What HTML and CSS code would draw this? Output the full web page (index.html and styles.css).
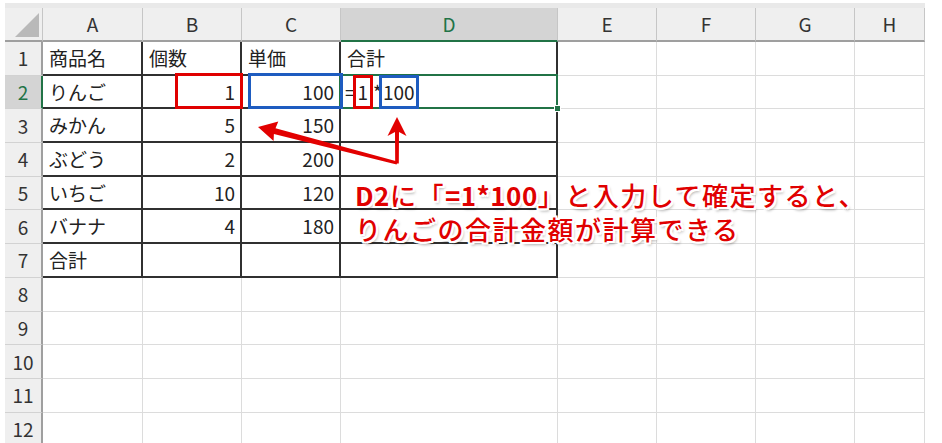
FILE: index.html
```html
<!DOCTYPE html>
<html lang="ja">
<head>
<meta charset="utf-8">
<title>Sheet</title>
<link rel="stylesheet" href="styles.css">
</head>
<body>
<div class="frame">
  <div class="topband"></div>
  <div class="sheet">
    <div class="c hd corner"><span class="tri"></span></div>
    <div class="c hd">A</div>
    <div class="c hd">B</div>
    <div class="c hd">C</div>
    <div class="c hd sel">D</div>
    <div class="c hd">E</div>
    <div class="c hd">F</div>
    <div class="c hd">G</div>
    <div class="c hd">H</div>

    <div class="c rh">1</div>
    <div class="c t">商品名</div>
    <div class="c t">個数</div>
    <div class="c t">単価</div>
    <div class="c t">合計</div>
    <div class="c"></div><div class="c"></div><div class="c"></div><div class="c"></div>

    <div class="c rh sel">2</div>
    <div class="c t">りんご</div>
    <div class="c t num">1</div>
    <div class="c t num">100</div>
    <div class="c t active"><span class="f">=<span class="mk mk-r">1</span>*<span class="mk mk-b">100</span></span><span class="handle"></span></div>
    <div class="c"></div><div class="c"></div><div class="c"></div><div class="c"></div>

    <div class="c rh">3</div>
    <div class="c t">みかん</div>
    <div class="c t num">5</div>
    <div class="c t num">150</div>
    <div class="c t"></div>
    <div class="c"></div><div class="c"></div><div class="c"></div><div class="c"></div>

    <div class="c rh">4</div>
    <div class="c t">ぶどう</div>
    <div class="c t num">2</div>
    <div class="c t num">200</div>
    <div class="c t"></div>
    <div class="c"></div><div class="c"></div><div class="c"></div><div class="c"></div>

    <div class="c rh">5</div>
    <div class="c t">いちご</div>
    <div class="c t num">10</div>
    <div class="c t num">120</div>
    <div class="c t"></div>
    <div class="c"></div><div class="c"></div><div class="c"></div><div class="c"></div>

    <div class="c rh">6</div>
    <div class="c t">バナナ</div>
    <div class="c t num">4</div>
    <div class="c t num">180</div>
    <div class="c t"></div>
    <div class="c"></div><div class="c"></div><div class="c"></div><div class="c"></div>

    <div class="c rh">7</div>
    <div class="c t">合計</div>
    <div class="c t"></div>
    <div class="c t"></div>
    <div class="c t"></div>
    <div class="c"></div><div class="c"></div><div class="c"></div><div class="c"></div>

    <div class="c rh">8</div>
    <div class="c"></div><div class="c"></div><div class="c"></div><div class="c"></div>
    <div class="c"></div><div class="c"></div><div class="c"></div><div class="c"></div>

    <div class="c rh">9</div>
    <div class="c"></div><div class="c"></div><div class="c"></div><div class="c"></div>
    <div class="c"></div><div class="c"></div><div class="c"></div><div class="c"></div>

    <div class="c rh">10</div>
    <div class="c"></div><div class="c"></div><div class="c"></div><div class="c"></div>
    <div class="c"></div><div class="c"></div><div class="c"></div><div class="c"></div>

    <div class="c rh">11</div>
    <div class="c"></div><div class="c"></div><div class="c"></div><div class="c"></div>
    <div class="c"></div><div class="c"></div><div class="c"></div><div class="c"></div>

    <div class="c rh">12</div>
    <div class="c"></div><div class="c"></div><div class="c"></div><div class="c"></div>
    <div class="c"></div><div class="c"></div><div class="c"></div><div class="c"></div>

    <div class="hl hl-b2"></div>
    <div class="hl hl-c2"></div>

    <svg class="arrows" width="920" height="435" viewBox="0 0 920 435">
      <g fill="#e20000">
        <polygon points="253,119 273.3,113.6 270.5,120.2 392.4,153.6 391.6,156.4 268.9,126 268.6,133"/>
        <polygon points="392,109 401.5,128 394,124 393.8,155.5 390.2,155.5 390,124 382.5,128"/>
      </g>
    </svg>

    <div class="note">
      <div><span class="b">D2</span>に「<span class="b">=1*100</span>」と入力して確定すると、</div>
      <div>りんごの合計金額が計算できる</div>
    </div>
  </div>
</div>
</body>
</html>
```

FILE: styles.css
```css
* { box-sizing: border-box; }
html, body { margin: 0; padding: 0; background: #fff; }
body { font-family: "Noto Sans CJK JP", "Noto Sans", sans-serif; }

.frame { padding: 3px 17px 0 5px; height: 443px; overflow: hidden; }
.topband { height: 5px; background: #e9e9e9; }

.sheet {
  position: relative;
  display: grid;
  grid-template-columns: 38px 100px 99px 99px 217px 99px 99px 99px 70px;
  grid-template-rows: 34px repeat(12, 33.7px);
  height: 435px;
  overflow: hidden;
}

.c {
  border-right: 1px solid #dcdcdc;
  border-bottom: 1px solid #dcdcdc;
  display: flex;
  align-items: center;
  padding: 0 5px 0 6px;
  font-size: 19px;
  line-height: 22px;
  color: #222;
  white-space: nowrap;
}

.hd {
  background: #efefef;
  border-right-color: #c6c6c6;
  border-bottom: 2px solid #9f9f9f;
  justify-content: center;
  color: #333;
  padding: 0;
}
.rh {
  background: #efefef;
  border-right: 2px solid #9f9f9f;
  border-bottom-color: #d2d2d2;
  justify-content: center;
  color: #333;
  padding: 0;
}
.corner { justify-content: flex-end; align-items: flex-end; padding: 0 3px 3px 0; }
.tri { width: 24px; height: 24px; background: #b9b9b9; clip-path: polygon(100% 0, 100% 100%, 0 100%); }

.sel { background: #d4d4d4; color: #217346; }
.hd.sel { border-bottom-color: #217346; }
.rh.sel { border-right-color: #217346; }

.t { border-right: 2px solid #303030; border-bottom: 2px solid #303030; }
.num { justify-content: flex-end; }

.active { position: relative; padding-left: 4px; }
.active::before {
  content: "";
  position: absolute;
  left: -2px; top: -2px; right: -2px; bottom: -2px;
  border: 2px solid #217346;
}
.handle {
  position: absolute;
  right: -5px; bottom: -5px;
  width: 7px; height: 7px;
  background: #217346;
  border: 1px solid #fff;
  z-index: 2;
}

.mk { position: relative; display: inline-block; }
.mk::after {
  content: "";
  position: absolute;
  left: 0; right: 0;
  top: -6px; bottom: -6px;
  border: 3px solid;
}
.mk-r { padding: 0 5px; margin-left: -3px; }
.mk-r::after { border-color: #e00000; }
.mk-b { padding: 0 4px; margin-left: -3px; }
.mk-b::after { border-color: #1e5cc0; }

.hl { position: absolute; border: 3px solid; }
.hl-b2 { left: 170px; top: 65px; width: 68px; height: 36px; border-color: #e00000; }
.hl-c2 { left: 243px; top: 65px; width: 95px; height: 36px; border-color: #1e5cc0; }

.arrows { position: absolute; left: 0; top: 0; pointer-events: none; }

.note {
  position: absolute;
  left: 350px;
  top: 170px;
  font-size: 26px;
  font-weight: 500;
  line-height: 34px;
  color: #e00000;
  letter-spacing: 1.5px;
  white-space: nowrap;
  text-shadow:
    2px 0 #fff, -2px 0 #fff, 0 2px #fff, 0 -2px #fff,
    2px 2px #fff, -2px -2px #fff, 2px -2px #fff, -2px 2px #fff,
    2px 3px 3px rgba(0, 0, 0, 0.35);
}
.note .b { font-weight: 700; letter-spacing: 0.5px; }
```
